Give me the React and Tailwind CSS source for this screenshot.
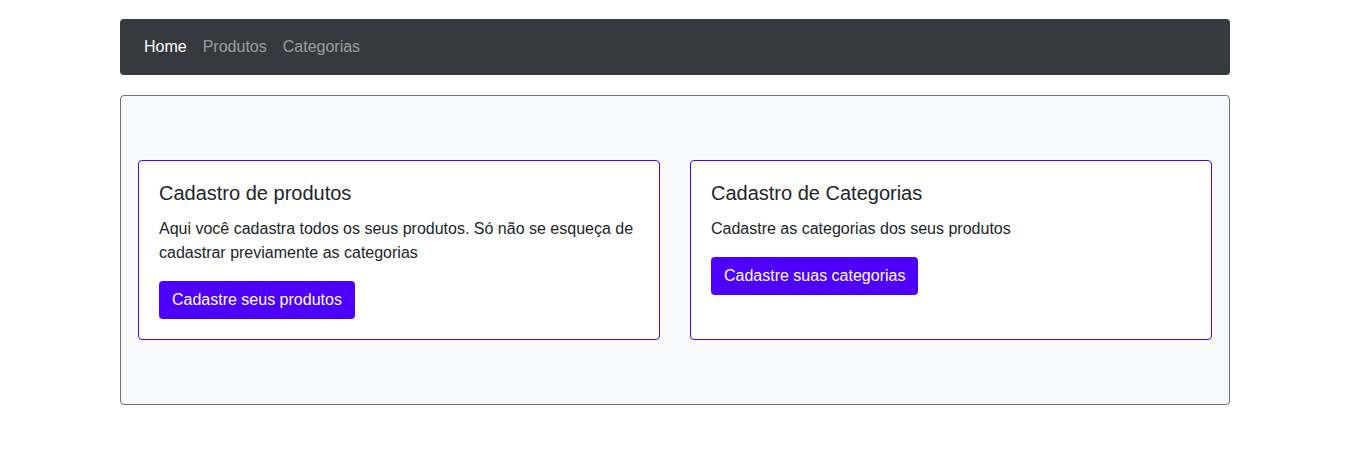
export default function App() {
  const font = { fontFamily: '"Liberation Sans", Arial, sans-serif' };
  return (
    <div className="bg-white min-h-[451px] text-[#212529]" style={font}>
      <div className="w-[1112px] mx-auto pr-[2px] pt-[19px]">
        <nav className="h-[56px] bg-[#343a40] rounded-[4px] flex items-center px-[16px]">
          <a className="px-[8px] text-[16px] leading-[24px] text-white">Home</a>
          <a className="px-[8px] text-[16px] leading-[24px] text-white/50">Produtos</a>
          <a className="px-[8px] text-[16px] leading-[24px] text-white/50">Categorias</a>
        </nav>
        <div className="mt-[20px] border border-[#6c757d] rounded-[4px] bg-[#f8f9fa] px-[17px] py-[64px] flex gap-[30px]">
          <div className="flex-1 bg-white border border-[#4d00ff] rounded-[4px] p-[20px]">
            <h5 className="text-[20px] leading-[24px] mb-[12px] font-normal">Cadastro de produtos</h5>
            <p className="text-[16px] leading-[24px] mb-[16px]">
              Aqui você cadastra todos os seus produtos. Só não se esqueça de cadastrar previamente as categorias
            </p>
            <button className="bg-[#4d00ff] text-white text-[16px] leading-[24px] px-[13px] py-[7px] rounded-[4px]">
              Cadastre seus produtos
            </button>
          </div>
          <div className="flex-1 bg-white border border-[#4d00ff] rounded-[4px] p-[20px]">
            <h5 className="text-[20px] leading-[24px] mb-[12px] font-normal">Cadastro de Categorias</h5>
            <p className="text-[16px] leading-[24px] mb-[16px]">Cadastre as categorias dos seus produtos</p>
            <button className="bg-[#4d00ff] text-white text-[16px] leading-[24px] px-[13px] py-[7px] rounded-[4px]">
              Cadastre suas categorias
            </button>
          </div>
        </div>
      </div>
    </div>
  );
}
